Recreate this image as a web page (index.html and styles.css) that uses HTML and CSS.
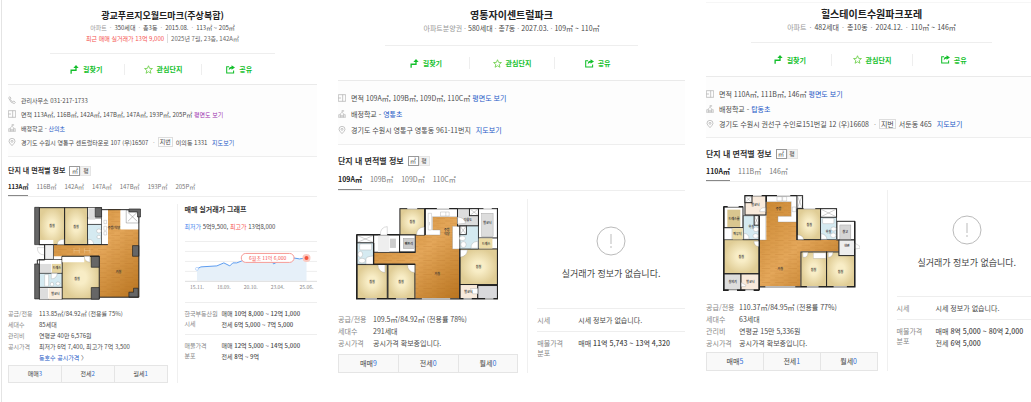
FILE: index.html
```
<!DOCTYPE html>
<html lang="ko">
<head>
    <meta charset="UTF-8">
    <meta name="viewport" content="width=device-width, initial-scale=1.0">
    <title>단지 비교</title>
    <link rel="stylesheet" href="styles.css">
</head>
<body>

<!-- Shared icons and floor plan fills -->
<svg class="defs" width="0" height="0" aria-hidden="true">
    <defs>
        <radialGradient id="room">
            <stop offset="0.3" stop-color="#f8edc6"/>
            <stop offset="1" stop-color="#e0cd96"/>
        </radialGradient>
        <linearGradient id="wood" x1="0" y1="0" x2="1" y2="1">
            <stop offset="0" stop-color="#c98630"/>
            <stop offset="0.5" stop-color="#e4a75a"/>
            <stop offset="1" stop-color="#b9741f"/>
        </linearGradient>
        <pattern id="grain" width="40" height="14" patternUnits="userSpaceOnUse">
            <path d="M0 3H24M14 10H40" stroke="#a8661c" stroke-opacity="0.25" stroke-width="2"/>
        </pattern>
        <pattern id="tile" width="6" height="6" patternUnits="userSpaceOnUse">
            <rect width="6" height="6" fill="#fff"/>
            <path d="M0 0L6 6M6 0L0 6" stroke="#ccc" stroke-width="1"/>
        </pattern>
        <symbol id="icon-route" viewBox="0 0 24 24">
            <path d="M3 23V14H16V5" fill="none" stroke="#13bf2b" stroke-width="3.5"/>
            <path d="M9 8L16 0L23 8Z" fill="#13bf2b"/>
        </symbol>
        <symbol id="icon-star" viewBox="0 0 24 24">
            <path d="M12 2L15 9L22.500 9.500L16.500 14.500L18.500 22L12 18L5.500 22L7.500 14.500L1.500 9.500L9 9Z" fill="none" stroke="#5bc934" stroke-width="2"/>
        </symbol>
        <symbol id="icon-share" viewBox="0 0 26 24">
            <path d="M9 4H2V22H22V15" fill="none" stroke="#13bf2b" stroke-width="3"/>
            <path d="M16 0L26 6L16 13V9Q11 9 8 14Q8 4 16 4Z" fill="#13bf2b"/>
        </symbol>
        <symbol id="icon-phone" viewBox="0 0 24 24">
            <path d="M5 2L9 6L7 10Q9 15 14 17L18 15L22 19L19 23Q8 22 2 6Z" fill="none" stroke="#aaa" stroke-width="2"/>
        </symbol>
        <symbol id="icon-plan" viewBox="0 0 24 24">
            <path d="M1 2H23V22H1ZM14 2V22M1 12H9" fill="none" stroke="#aaa" stroke-width="2"/>
        </symbol>
        <symbol id="icon-school" viewBox="0 0 24 24">
            <path d="M2 22V14H7V22M17 22V14H22V22M7 22V11L12 7L17 11V22M12 7V1H17V4H12M10 22V16H14V22M1 22H23" fill="none" stroke="#bbb" stroke-width="2"/>
        </symbol>
        <symbol id="icon-pin" viewBox="0 0 24 24">
            <path d="M12 23Q3 14 3 10A9 9 0 0 1 21 10Q21 14 12 23Z" fill="none" stroke="#aaa" stroke-width="2"/>
            <circle cx="12" cy="10" r="3" fill="none" stroke="#aaa" stroke-width="2"/>
        </symbol>
        <symbol id="icon-empty" viewBox="0 0 30 30">
            <circle cx="15" cy="15" r="14" fill="none" stroke="#bbb"/>
            <path d="M15 8V18M15 20V22" stroke="#bbb"/>
        </symbol>
    </defs>
</svg>

<main class="compare">

    <article class="card card-a">
        <header class="card-head">
            <h2>광교푸르지오월드마크(주상복합)</h2>
            <p class="summary"><span class="muted">아파트</span><i>·</i>350세대<i>·</i>총3동<i>·</i>2015.08.<i>·</i>113㎡ ~ 205㎡</p>
            <p class="recent"><strong>최근 매매 실거래가 13억 9,000</strong><span>2025년 7월, 23층, 142A㎡</span></p>
        </header>
        <div class="actions">
            <div><button type="button"><svg><use href="#icon-route"/></svg>길찾기</button></div>
            <div><button type="button"><svg><use href="#icon-star"/></svg>관심단지</button></div>
            <div><button type="button"><svg><use href="#icon-share"/></svg>공유</button></div>
        </div>
        <ul class="facts">
            <li><svg><use href="#icon-phone"/></svg>관리사무소 031-217-1733</li>
            <li><svg><use href="#icon-plan"/></svg>면적 113A㎡, 116B㎡, 142A㎡, 147B㎡, 147A㎡, 193P㎡, 205P㎡ <a class="visited" href="#">평면도 보기</a></li>
            <li><svg><use href="#icon-school"/></svg>배정학교 - <a href="#">산의초</a></li>
            <li><svg><use href="#icon-pin"/></svg>경기도 수원시 영통구 센트럴타운로 107 (우)16507 <i>·</i><span class="lot">지번</span>이의동 1331 <a class="map" href="#">지도보기</a></li>
        </ul>
        <div class="area-head">
            <h3>단지 내 면적별 정보</h3>
            <div class="unit"><button type="button" class="on">㎡</button><button type="button">평</button></div>
        </div>
        <nav class="tabs">
            <a class="on" href="#">113A㎡</a><a href="#">116B㎡</a><a href="#">142A㎡</a><a href="#">147A㎡</a><a href="#">147B㎡</a><a href="#">193P㎡</a><a href="#">205P㎡</a>
        </nav>
        <div class="detail">
            <div class="left">
                <svg class="plan" viewBox="102 33 321 282">
                    <path d="M305 42H362V103H417V307H298V184H160V149H324V42Z" fill="url(#wood)"/>
                    <path d="M305 42H362V103H417V307H298V184H160V149H324V42Z" fill="url(#grain)"/>
                    <g fill="url(#room)" stroke="#222" stroke-width="3">
                        <rect x="118" y="38" width="76" height="111"/>
                        <rect x="194" y="38" width="69" height="111"/>
                        <path d="M186 184H298V312H186Z"/>
                    </g>
                    <g fill="#fff" stroke="#222" stroke-width="2">
                        <rect x="263" y="38" width="42" height="36"/>
                        <rect x="263" y="69" width="42" height="19"/>
                        <rect x="134" y="149" width="26" height="44" fill="url(#tile)"/>
                        <rect x="118" y="194" width="68" height="41"/>
                        <rect x="118" y="277" width="68" height="36"/>
                    </g>
                    <path d="M362 46H417V103H362Z" fill="#fff"/>
                    <path d="M379 46H417V84H379ZM384 52L412 79M412 52L384 79" fill="none" stroke="#444" stroke-width="1"/>
                    <rect x="306" y="44" width="18" height="105" fill="#fff"/>
                    <rect x="265" y="40" width="21" height="34" fill="#ddd"/>
                    <rect x="120" y="207" width="34" height="28" fill="#ddd"/>
                    <rect x="156" y="207" width="28" height="27" fill="#e6d5a1"/>
                    <rect x="120" y="280" width="24" height="33" fill="#ddd"/>
                    <rect x="146" y="280" width="38" height="33" fill="#f8ecdd"/>
                    <rect x="119" y="135" width="41" height="14" fill="#fff"/>
                    <rect x="187" y="186" width="66" height="16" fill="#fff"/>
                    <g fill="#d5eaf1" stroke="#222" stroke-width="2">
                        <rect x="263" y="88" width="42" height="61"/>
                        <rect x="118" y="235" width="68" height="42"/>
                    </g>
                    <g fill="#fff" stroke="#999" stroke-width="1">
                        <ellipse cx="297" cy="108" rx="7" ry="6"/>
                        <ellipse cx="297" cy="126" rx="6" ry="5"/>
                        <path d="M265 149V133Q281 133 281 149ZM134 239H146V274H134ZM112 158H134V180Q112 180 112 158Z"/>
                        <path d="M172 149Q172 133 192 133V149ZM253 184H270V202Q253 200 253 184ZM154 235V252Q170 252 172 235Z"/>
                        <ellipse cx="156" cy="268" rx="5" ry="6"/>
                        <ellipse cx="174" cy="266" rx="6" ry="5"/>
                        <path d="M312 76H320V86H312ZM312 94H320V106H312ZM312 110H320V120H312Z"/>
                        <path d="M222 160V175M222 167H238M238 160V175M254 160V175M254 167H270M270 160V175" fill="none" stroke="#f6dfba"/>
                    </g>
                    <g fill="#666" stroke="#222" stroke-width="2">
                        <path d="M104 37H118V149H104ZM104 207H118V312H104ZM286 38H305V66H286ZM274 184H298V217H274ZM274 278H298V313H274ZM398 152H417V184H398Z"/>
                        <path d="M387 42H422V66H413V51H387ZM415 280V307H387V292H401V280Z"/>
                    </g>
                    <path d="M305 44H387M417 66V307H298M134 149V195H112V207M118 149H160M298 184H270M194 149H324" fill="none" stroke="#222" stroke-width="3"/>
                    <g class="room-name">
                        <text x="156" y="97">침실</text><text x="228" y="98">침실</text><text x="231" y="256">침실</text>
                        <text x="356" y="234">거실</text><text x="342" y="103">주방/식당</text><text x="171" y="223">드레스</text><text x="166" y="299">발코니</text>
                    </g>
                </svg>
                <dl class="info">
                    <dt>공급/전용</dt><dd>113.85㎡/84.92㎡ (전용률 75%)</dd>
                    <dt>세대수</dt><dd>85세대</dd>
                    <dt>관리비</dt><dd>연평균 40만 6,576원</dd>
                    <dt>공시가격</dt><dd>최저가 6억 7,400, 최고가 7억 3,500</dd>
                    <dd class="more"><a href="#">동호수 공시가격</a> 〉</dd>
                </dl>
                <div class="counts"><a href="#">매매<b>3</b></a><a href="#">전세<b>2</b></a><a href="#">월세<b>1</b></a></div>
            </div>
            <div class="right">
                <div class="graph">
                    <h4>매매 실거래가 그래프</h4>
                    <p><span class="low">최저가</span> 5억9,500, <span class="high">최고가</span> 13억8,000</p>
                    <svg class="chart" viewBox="0 0 133 52">
                        <path d="M0 1.500H133M0 11.500H133M0 21.500H133M0 31.500H133" stroke="#eee"/>
                        <path d="M12 29L16 27L32 26L39 23L45 26L48 23L52 23L57 21L70 17L86 20L89 24L96 20L109 18L115 19L122 18V41H12Z" fill="#e6f0f9"/>
                        <path d="M0 41.500H133" stroke="#ddd"/>
                        <path d="M12 29L16 27L32 26L39 23L45 26L48 23L52 23L57 21L70 17L86 20L89 24L96 20L109 18L115 19L122 18" fill="none" stroke="#5b9bf0"/>
                        <circle cx="12" cy="29" r="1.500" fill="#fff" stroke="#8db9f5" stroke-width="0.500"/>
                        <circle cx="122" cy="18" r="4" fill="#fbc9c1"/>
                        <circle cx="122" cy="18" r="2" fill="#f4533c"/>
                        <rect x="56.500" y="13.500" width="53" height="9" rx="4.500" fill="#fff" stroke="#f59a95"/>
                        <text class="tip" x="83" y="20">6월초 11억 6,000</text>
                        <g class="axis">
                            <text x="12" y="49">15.11.</text><text x="39" y="49">18.09.</text><text x="66" y="49">20.10.</text><text x="93" y="49">23.04.</text><text x="122" y="49">25.06.</text>
                        </g>
                    </svg>
                </div>
                <dl class="prices">
                    <div><dt>한국부동산원 시세</dt><dd>매매 <b>10억 8,000 ~ 12억 1,000</b><br>전세 <b>6억 5,000 ~ 7억 5,000</b></dd></div>
                    <div><dt>매물가격<br>분포</dt><dd>매매 <b>12억 5,000 ~ 14억 5,000</b><br>전세 <b>8억 ~ 9억</b></dd></div>
                </dl>
            </div>
        </div>
    </article>

    <article class="card card-b">
        <header class="card-head">
            <h2>영통자이센트럴파크</h2>
            <p class="summary"><span class="muted">아파트분양권</span><i>·</i>580세대<i>·</i>총7동<i>·</i>2027.03.<i>·</i>109㎡ ~ 110㎡</p>
        </header>
        <div class="actions">
            <div><button type="button"><svg><use href="#icon-route"/></svg>길찾기</button></div>
            <div><button type="button"><svg><use href="#icon-star"/></svg>관심단지</button></div>
            <div><button type="button"><svg><use href="#icon-share"/></svg>공유</button></div>
        </div>
        <ul class="facts">
            <li><svg><use href="#icon-plan"/></svg>면적 109A㎡, 109B㎡, 109D㎡, 110C㎡ <a href="#">평면도 보기</a></li>
            <li><svg><use href="#icon-school"/></svg>배정학교 - <a href="#">영통초</a></li>
            <li><svg><use href="#icon-pin"/></svg>경기도 수원시 영통구 영통동 961-11번지 <a class="map" href="#">지도보기</a></li>
        </ul>
        <div class="area-head">
            <h3>단지 내 면적별 정보</h3>
            <div class="unit"><button type="button" class="on">㎡</button><button type="button">평</button></div>
        </div>
        <nav class="tabs">
            <a class="on" href="#">109A㎡</a><a href="#">109B㎡</a><a href="#">109D㎡</a><a href="#">110C㎡</a>
        </nav>
        <div class="detail">
            <div class="left">
                <svg class="plan" viewBox="92 185 428 279">
                    <path d="M270 269H322V214H397V311H403V459H270V357H145V321H270Z" fill="url(#wood)"/>
                    <path d="M270 269H322V214H397V311H403V459H270V357H145V321H270Z" fill="url(#grain)"/>
                    <path d="M300 190H397V214H322V254H345V269H300ZM382 243H403V311H382Z" fill="#fff" stroke="#888" stroke-width="1"/>
                    <g fill="url(#room)" stroke="#222" stroke-width="3">
                        <rect x="224" y="190" width="74" height="79"/>
                        <rect x="95" y="358" width="91" height="102"/>
                        <rect x="188" y="358" width="81" height="102"/>
                        <rect x="404" y="311" width="113" height="107"/>
                    </g>
                    <g fill="#fff" stroke="#222" stroke-width="3">
                        <rect x="95" y="269" width="50" height="24"/>
                        <rect x="145" y="269" width="78" height="52"/>
                        <rect x="223" y="269" width="47" height="52"/>
                        <rect x="460" y="190" width="57" height="88"/>
                        <rect x="397" y="190" width="63" height="52" fill="#ddd"/>
                        <rect x="404" y="418" width="54" height="42" fill="#f8eadc"/>
                        <rect x="458" y="421" width="59" height="39" fill="#d9d9dc"/>
                        <rect x="404" y="242" width="20" height="26"/>
                        <rect x="433" y="190" width="27" height="21"/>
                    </g>
                    <g fill="#d5eaf1" stroke="#222" stroke-width="2">
                        <rect x="95" y="293" width="50" height="64"/>
                        <path d="M424 242H460V311H404V268H424Z"/>
                    </g>
                    <rect x="462" y="279" width="40" height="31" fill="#ecdca7"/>
                    <rect x="158" y="271" width="34" height="49" fill="url(#tile)"/>
                    <rect x="194" y="280" width="18" height="28" fill="#ccc"/>
                    <rect x="234" y="279" width="33" height="31" fill="#ccc" stroke="#888"/>
                    <rect x="470" y="204" width="34" height="70" fill="#ddd" stroke="#888"/>
                    <g fill="#fff" stroke="#999" stroke-width="1">
                        <rect x="103" y="296" width="36" height="18" rx="3"/>
                        <ellipse cx="105" cy="327" rx="7" ry="9"/>
                        <ellipse cx="110" cy="346" rx="10" ry="7"/>
                        <ellipse cx="412" cy="279" rx="9" ry="7"/>
                        <ellipse cx="415" cy="298" rx="8" ry="9"/>
                        <path d="M122 356V341Q122 334 144 332V356ZM158 358H179V382Q158 380 158 358ZM247 358H268V382Q247 380 247 358Z"/>
                        <path d="M165 269Q165 245 186 244V269ZM274 269Q274 247 297 245V269ZM438 309Q436 290 458 288V309ZM404 314H427Q425 334 404 336ZM458 446H443L436 430H458Z"/>
                        <path d="M397 236V215Q420 217 421 234ZM346 200H372V212H346ZM362 200V212M309 204H319V254H309ZM313 230V240"/>
                        <path d="M97 271L143 291M143 271L97 291M406 244L422 266M422 244L406 266M436 192L458 209M458 192L436 209" fill="none" stroke="#777"/>
                    </g>
                    <path d="M298 190H397M404 311V460M92 461H520M300 190V269M270 321H223M145 293V357H270M518 188V463M94 268V463M94 268H165M186 268H223" fill="none" stroke="#222" stroke-width="4"/>
                    <path d="M246 190H276M335 190H372M475 190H500M120 461H155M212 461H245M290 461H375M415 461H440M480 461H505" stroke="#ddd" stroke-width="4"/>
                    <g class="room-name">
                        <text x="261" y="233">침실</text><text x="140" y="412">침실</text><text x="227" y="412">침실</text><text x="460" y="369">침실</text>
                        <text x="336" y="389">거실</text><text x="365" y="258">주방</text><text x="365" y="269">식당</text><text x="487" y="237">발코니</text>
                        <text x="428" y="228">다용도</text><text x="483" y="298">드레스</text><text x="251" y="299">팬트리</text><text x="430" y="443">발코니</text>
                    </g>
                </svg>
                <dl class="info">
                    <dt>공급/전용</dt><dd>109.5㎡/84.92㎡ (전용률 78%)</dd>
                    <dt>세대수</dt><dd>291세대</dd>
                    <dt>공시가격</dt><dd>공시가격 확보중입니다.</dd>
                </dl>
                <div class="counts"><a href="#">매매<b>9</b></a><a href="#">전세<b>0</b></a><a href="#">월세<b>0</b></a></div>
            </div>
            <div class="right">
                <div class="empty">
                    <svg><use href="#icon-empty"/></svg>
                    <p>실거래가 정보가 없습니다.</p>
                </div>
                <dl class="prices">
                    <div><dt>시세</dt><dd>시세 정보가 없습니다.</dd></div>
                    <div><dt>매물가격<br>분포</dt><dd>매매 <b>11억 5,743 ~ 13억 4,320</b></dd></div>
                </dl>
            </div>
        </div>
    </article>

    <article class="card card-c">
        <header class="card-head">
            <h2>힐스테이트수원파크포레</h2>
            <p class="summary"><span class="muted">아파트</span><i>·</i>482세대<i>·</i>총10동<i>·</i>2024.12.<i>·</i>110㎡ ~ 146㎡</p>
        </header>
        <div class="actions">
            <div><button type="button"><svg><use href="#icon-route"/></svg>길찾기</button></div>
            <div><button type="button"><svg><use href="#icon-star"/></svg>관심단지</button></div>
            <div><button type="button"><svg><use href="#icon-share"/></svg>공유</button></div>
        </div>
        <ul class="facts">
            <li><svg><use href="#icon-plan"/></svg>면적 110A㎡, 111B㎡, 146㎡ <a href="#">평면도 보기</a></li>
            <li><svg><use href="#icon-school"/></svg>배정학교 - <a href="#">탑동초</a></li>
            <li><svg><use href="#icon-pin"/></svg>경기도 수원시 권선구 수인로151번길 12 (우)16608 <i>·</i><span class="lot">지번</span>서둔동 465 <a class="map" href="#">지도보기</a></li>
        </ul>
        <div class="area-head">
            <h3>단지 내 면적별 정보</h3>
            <div class="unit"><button type="button" class="on">㎡</button><button type="button">평</button></div>
        </div>
        <nav class="tabs">
            <a class="on" href="#">110A㎡</a><a href="#">111B㎡</a><a href="#">146㎡</a>
        </nav>
        <div class="detail">
            <div class="left">
                <svg class="plan" viewBox="98 167 412 288">
                    <path d="M228 187H303V231H320V302H446V337H331V442H207V302H228Z" fill="url(#wood)"/>
                    <path d="M228 187H303V231H320V302H446V337H331V442H207V302H228Z" fill="url(#grain)"/>
                    <path d="M228 170H320V248H263V231H303V187H228ZM207 229H226V302H207Z" fill="#fff" stroke="#888" stroke-width="1"/>
                    <g fill="url(#room)" stroke="#222" stroke-width="3">
                        <rect x="101" y="301" width="105" height="102"/>
                        <rect x="321" y="208" width="70" height="93"/>
                        <rect x="332" y="338" width="77" height="104"/>
                        <rect x="409" y="338" width="84" height="104"/>
                    </g>
                    <g fill="#fff" stroke="#222" stroke-width="3">
                        <rect x="164" y="169" width="63" height="58" fill="#f8eadc"/>
                        <rect x="101" y="203" width="57" height="62"/>
                        <rect x="101" y="404" width="51" height="48" fill="#ddd"/>
                        <rect x="152" y="404" width="54" height="48" fill="#f8eadc"/>
                        <rect x="320" y="169" width="17" height="38"/>
                        <rect x="391" y="208" width="48" height="26"/>
                        <rect x="440" y="246" width="53" height="56"/>
                        <rect x="446" y="302" width="47" height="47" fill="url(#tile)"/>
                        <rect x="164" y="169" width="21" height="21"/>
                        <rect x="191" y="229" width="15" height="29"/>
                    </g>
                    <g fill="#d5eaf1" stroke="#222" stroke-width="2">
                        <path d="M159 229H191V258H206V301H159Z"/>
                        <rect x="391" y="234" width="48" height="67"/>
                    </g>
                    <rect x="111" y="211" width="39" height="52" fill="#d9c68f"/>
                    <rect x="126" y="267" width="31" height="34" fill="#ecdca7"/>
                    <rect x="103" y="267" width="22" height="33" fill="#fff" stroke="#888" stroke-width="1"/>
                    <rect x="449" y="257" width="33" height="43" fill="#d5d5d5" stroke="#888"/>
                    <rect x="369" y="341" width="38" height="16" fill="#fff" stroke="#aaa"/>
                    <g fill="#fff" stroke="#999" stroke-width="1">
                        <rect x="397" y="237" width="34" height="16" rx="3"/>
                        <ellipse cx="430" cy="269" rx="8" ry="6"/>
                        <ellipse cx="429" cy="288" rx="8" ry="7"/>
                        <ellipse cx="197" cy="270" rx="8" ry="7"/>
                        <ellipse cx="196" cy="290" rx="8" ry="7"/>
                        <path d="M260 172H275V185H260ZM277 172H289V185H277ZM306 203H317V217H306ZM161 299V282Q177 284 176 299ZM191 306H206V322Q191 321 191 306Z"/>
                        <path d="M322 301V287Q338 287 340 301ZM393 300V283Q409 286 410 300ZM338 340H353Q353 356 338 354ZM414 340H428Q428 353 414 354ZM208 217Q209 204 225 205V217ZM493 311L508 320L510 327L493 329ZM153 442V430L167 438L165 442Z"/>
                        <path d="M166 171L183 188M183 171L166 188M322 171L335 205M335 171L322 205M393 210L437 232M437 210L393 232M193 231L204 256M204 231L193 256" fill="none" stroke="#777"/>
                    </g>
                    <path d="M164 169H320M99 202H158M207 229V452M100 203V453H207M207 443H494V246M228 187V169M320 208V302" fill="none" stroke="#222" stroke-width="4"/>
                    <path d="M188 169H214M260 169H300M112 202H145M115 453H140M165 453H190M225 443H315M350 443H385M430 443H470M340 208H375" stroke="#ddd" stroke-width="4"/>
                    <g class="room-name">
                        <text x="153" y="355">침실</text><text x="357" y="259">침실</text><text x="370" y="395">침실</text><text x="451" y="400">침실</text>
                        <text x="270" y="392">거실</text><text x="265" y="212">주방</text><text x="195" y="201">발코니</text><text x="131" y="241">드레스룸</text>
                        <text x="141" y="288">파우더</text><text x="127" y="431">실외기</text><text x="180" y="431">발코니</text><text x="470" y="323">현관</text><text x="465" y="282">창고</text><text x="415" y="282">욕실</text><text x="183" y="266">욕실</text>
                    </g>
                </svg>
                <dl class="info">
                    <dt>공급/전용</dt><dd>110.37㎡/84.95㎡ (전용률 77%)</dd>
                    <dt>세대수</dt><dd>63세대</dd>
                    <dt>관리비</dt><dd>연평균 15만 5,336원</dd>
                    <dt>공시가격</dt><dd>공시가격 확보중입니다.</dd>
                </dl>
                <div class="counts"><a href="#">매매<b>5</b></a><a href="#">전세<b>1</b></a><a href="#">월세<b>0</b></a></div>
            </div>
            <div class="right">
                <div class="empty">
                    <svg><use href="#icon-empty"/></svg>
                    <p>실거래가 정보가 없습니다.</p>
                </div>
                <dl class="prices">
                    <div><dt>시세</dt><dd>시세 정보가 없습니다.</dd></div>
                    <div><dt>매물가격<br>분포</dt><dd>매매 <b>8억 5,000 ~ 80억 2,000</b><br>전세 <b>6억 5,000</b></dd></div>
                </dl>
            </div>
        </div>
    </article>

</main>

</body>
</html>
```
FILE: styles.css
```
* {
    box-sizing: border-box;
    margin: 0;
    padding: 0;
}

body {
    font-family: "Noto Sans CJK KR", sans-serif;
    background-color: #fff;
    color: #4a4a4a;
    overflow-x: hidden;
}

a {
    color: #2458c6;
    text-decoration: none;
}

i {
    font-style: normal;
    color: #999;
}

button {
    font: inherit;
    color: inherit;
    background: none;
    border: none;
    cursor: pointer;
}

ul {
    list-style: none;
}

.defs {
    position: absolute;
}

/* The last card runs a little past the window edge */
.compare {
    display: grid;
    grid-template-columns: 309fr 347fr 331fr;
    column-gap: 21px;
    min-height: 100vh;
    margin-left: 1px;
    margin-right: -6px;
    padding-left: 6px;
    border-left: 1px solid #e4e4e4;
}

/* Each card has its own scale */
.card {
    min-width: 0;
    white-space: nowrap;
    font-size: 7px;
    line-height: 12px;
}

.card-a {
    font-size: 6px;
    line-height: 11px;
}

.card-c {
    margin-top: 2px;
    border-top: 1px solid #f6f6f6;
}

/* Title */
.card-head {
    width: 73%;
    margin: 0 auto;
    padding: 8px 0 11px;
    border-bottom: 1px solid #eee;
    display: flex;
    flex-direction: column;
    align-items: center;
}

.card-a .card-head {
    padding: 9px 0;
}

.card-c .card-head {
    padding: 4px 0 9px;
}

h2 {
    font-size: 10px;
    line-height: 14px;
    color: #222;
}

.card-a h2 {
    font-size: 9px;
    line-height: 13px;
}

.summary i {
    margin: 0 2px;
}

.card-c .summary i,
.card-a .summary i {
    margin: 0 3px;
}

.muted {
    color: #999;
}

.recent strong {
    font-weight: normal;
    color: #f5534f;
}

.recent span {
    margin-left: 3px;
    padding-left: 3px;
    border-left: 1px solid #ddd;
    color: #666;
}

/* Route, favourite, share */
.actions {
    display: grid;
    grid-template-columns: 1fr 1fr 1fr;
    align-items: center;
    height: 35px;
    padding: 0 13%;
    border-bottom: 1px solid #eaeaea;
}

.card-a .actions {
    height: 31px;
}

.card-c .actions {
    height: 34px;
}

.actions div {
    display: flex;
    justify-content: center;
}

.actions div + div {
    border-left: 1px solid #eee;
}

.actions button {
    display: flex;
    align-items: center;
    gap: 4px;
    font-size: 7px;
    font-weight: bold;
    color: #13bf2b;
}

.actions svg {
    width: 9px;
    height: 9px;
}

/* Address and school */
.facts {
    padding: 9px 0 6px;
    border-bottom: 1px solid #eee;
    background-color: #fdfdfd;
}

.card-a .facts {
    padding: 8px 0 7px;
}

.facts li {
    display: flex;
    align-items: center;
    height: 16px;
    white-space: pre;
}

.card-a .facts li {
    height: 14px;
}

.card-c .facts li {
    height: 15px;
}

.facts svg {
    width: 8px;
    height: 8px;
    margin-right: 5px;
}

.facts i {
    margin: 0 3px;
}

.facts .visited {
    color: #9b2fae;
}

.facts .map {
    margin-left: 3px;
}

.lot {
    margin-right: 3px;
    padding: 0 1px;
    border: 1px solid #ddd;
    line-height: 8px;
}

/* Heading and tabs */
.area-head {
    display: flex;
    align-items: center;
    gap: 4px;
    height: 23px;
    padding-top: 9px;
}

.card-a .area-head {
    height: 20px;
    padding-top: 7px;
}

h3 {
    font-size: 8px;
    color: #333;
}

.card-a h3,
h4 {
    font-size: 7px;
    color: #333;
}

.unit {
    display: flex;
}

.unit button {
    width: 11px;
    height: 10px;
    border: 1px solid #e5e5e5;
    background-color: #f3f3f3;
    font-size: 6px;
    line-height: 8px;
}

.unit .on {
    border-color: #999;
    background-color: #fff;
}

.tabs {
    display: flex;
    gap: 8px;
    height: 23px;
    border-bottom: 1px solid #eee;
}

.card-a .tabs {
    height: 20px;
}

.card-c .tabs {
    height: 21px;
}

.tabs a {
    display: flex;
    align-items: center;
    height: 100%;
    color: #777;
    border-bottom: 1px solid transparent;
}

.tabs .on {
    color: #222;
    font-weight: bold;
    border-bottom-color: #888;
}

/* Floor plan and prices */
.detail {
    display: grid;
    grid-template-columns: 6fr 5fr;
    margin-top: 8px;
}

.card-a .detail {
    margin-top: 7px;
}

.left {
    min-width: 0;
    padding-right: 9px;
}

.right {
    min-width: 0;
    padding-left: 9px;
    border-left: 1px solid #f0f0f0;
}

.card-a .right {
    padding-left: 7px;
}

.plan {
    display: block;
    width: 79%;
    margin: 8px auto 13px 18px;
}

.card-a .plan {
    width: 67%;
    margin: 2px auto 8px 26px;
}

.card-c .plan {
    width: 80%;
    margin: 5px auto 10px 17px;
}

.room-name {
    font-size: 9px;
    font-weight: bold;
    fill: #333;
    text-anchor: middle;
}

.info {
    display: grid;
    grid-template-columns: 35px 1fr;
}

.card-a .info {
    grid-template-columns: 31px 1fr;
}

.card-c .info {
    grid-template-columns: 33px 1fr;
}

.info dt,
.prices dt {
    color: #888;
}

.info .more {
    grid-column: 2;
}

.counts {
    display: flex;
    height: 19px;
    margin-top: 5px;
    border: 1px solid #e5e5e5;
    background-color: #f9f9f9;
}

.card-a .counts {
    height: 18px;
    margin-top: 2px;
}

.card-c .counts {
    margin-top: 3px;
}

.counts a {
    flex: 1;
    display: flex;
    align-items: center;
    justify-content: center;
    color: #444;
}

.counts a + a {
    border-left: 1px solid #e5e5e5;
}

.counts b {
    font-weight: normal;
    color: #2f6fd6;
}

/* Trade graph */
.graph {
    height: 98px;
}

.graph p {
    margin: 6px 0 8px;
}

.low {
    color: #3f86ee;
}

.high {
    color: #f5534f;
}

.chart {
    display: block;
    width: 100%;
}

.chart text {
    font-size: 5px;
    text-anchor: middle;
}

.tip {
    fill: #f5534f;
}

.axis {
    fill: #888;
}

.empty {
    display: flex;
    flex-direction: column;
    align-items: center;
    justify-content: center;
    gap: 10px;
    height: 109px;
    font-size: 9px;
    line-height: 16px;
    color: #444;
}

.card-c .empty {
    height: 106px;
}

.empty svg {
    width: 30px;
    height: 30px;
}

.prices div {
    display: grid;
    grid-template-columns: 41px 1fr;
    padding: 5px 0;
    border-top: 1px solid #eee;
}

.card-a .prices div {
    grid-template-columns: 37px 1fr;
    padding: 5px 0 4px;
}

.card-c .prices div {
    grid-template-columns: 39px 1fr;
}

.prices dt {
    line-height: 10px;
    white-space: normal;
    padding-top: 1px;
}

.prices b {
    font-weight: 500;
}
```
